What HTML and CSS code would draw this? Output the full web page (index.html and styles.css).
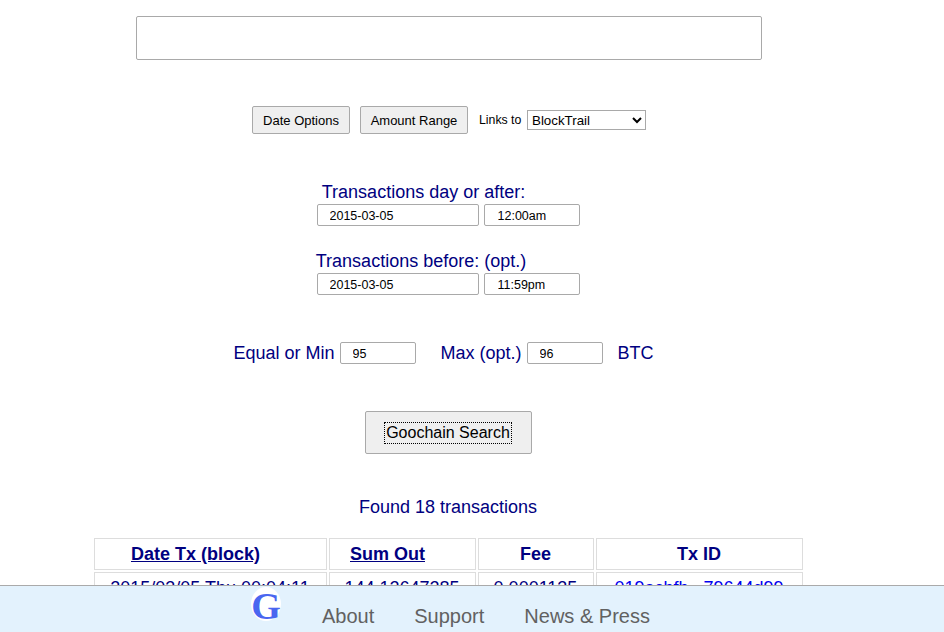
FILE: index.html
```html
<!DOCTYPE html>
<html lang="en">
<head>
<meta charset="utf-8">
<title>Goochain Search</title>
<link rel="stylesheet" href="styles.css">
</head>
<body>
<main class="page">
  <input class="query" type="text" aria-label="Search">
  <div class="options">
    <button class="btn btn-date" type="button">Date Options</button>
    <button class="btn btn-amount" type="button">Amount Range</button>
    <label class="links-label">Links to</label>
    <select class="links-select"><option>BlockTrail</option></select>
  </div>
  <section class="dates">
    <div class="date-group">
      <div class="date-label label-after">Transactions day or after:</div>
      <div class="date-fields">
        <input class="field field-date" type="text" value="2015-03-05">
        <input class="field field-time" type="text" value="12:00am">
      </div>
    </div>
    <div class="date-group">
      <div class="date-label label-before">Transactions before: (opt.)</div>
      <div class="date-fields">
        <input class="field field-date" type="text" value="2015-03-05">
        <input class="field field-time" type="text" value="11:59pm">
      </div>
    </div>
  </section>
  <div class="amounts">
    <span>Equal or Min</span>
    <input class="field field-amount" type="text" value="95">
    <span class="max-label">Max (opt.)</span>
    <input class="field field-amount" type="text" value="96">
    <span class="btc">BTC</span>
  </div>
  <div class="search-row"><button class="search-btn" type="button"><span class="focus-ring">Goochain Search</span></button></div>
  <p class="found">Found 18 transactions</p>
  <table class="results">
    <colgroup><col class="c1"><col class="c2"><col class="c3"><col class="c4"></colgroup>
    <thead>
      <tr><th class="sortable"><a href="#">Date Tx (block)</a></th><th class="sortable"><a href="#">Sum Out</a></th><th>Fee</th><th>Tx ID</th></tr>
    </thead>
    <tbody>
      <tr><td>2015/03/05 Thu 00:04:11</td><td>144.12647285</td><td>0.0001135</td><td><a class="tx" href="#">019acbfb...79644d99</a></td></tr>
    </tbody>
  </table>
</main>
<footer class="footer">
  <span class="logo">G</span>
  <a href="#">About</a>
  <a href="#">Support</a>
  <a href="#">News &amp; Press</a>
</footer>
</body>
</html>
```
FILE: styles.css
```css
* { box-sizing: border-box; }
html, body { height: 100%; }
body {
  margin: 0;
  overflow: hidden;
  background: #fff;
  color: #000080;
  font-family: "Liberation Sans", Arial, sans-serif;
}
.page {
  width: 896px;
  display: flex;
  flex-direction: column;
  align-items: center;
  padding-top: 16px;
}
input, select, button { font-family: "Liberation Sans", Arial, sans-serif; margin: 0; }
.query {
  width: 626px;
  height: 44px;
  margin-left: 2px;
  border: 1px solid #a9a9a9;
  border-radius: 2px;
  background: #fff;
}
.options {
  display: flex;
  align-items: center;
  margin-top: 46px;
  height: 28px;
  margin-left: 2px;
  color: #000;
}
.btn {
  height: 28px;
  padding: 0;
  font-size: 13px;
  color: #000;
  background: #efefef;
  border: 1px solid #a9a9a9;
  border-radius: 2px;
  margin-right: 10px;
  white-space: nowrap;
}
.btn-date { width: 98px; }
.btn-amount { width: 108px; }
.links-label { width: 43px; font-size: 12.3px; margin-left: 1px; margin-right: 5px; color: #000; white-space: nowrap; }
.links-select {
  width: 119px;
  height: 20px;
  font-size: 13.33px;
  border: 1px solid #a9a9a9;
  background: #fff;
  color: #000;
}
.dates { display: flex; flex-direction: column; gap: 24px; margin-top: 47px; }
.date-group { display: flex; flex-direction: column; align-items: center; }
.date-label { font-size: 18px; line-height: 23px; height: 23px; white-space: nowrap; }
.label-after { margin-right: 49px; }
.label-before { margin-right: 54px; }
.date-fields { display: flex; gap: 5px; }
.field {
  height: 22px;
  padding: 1px 0 0 12px;
  font-size: 12.5px;
  color: #000;
  background: #fff;
  border: 1px solid #a9a9a9;
  border-radius: 2px;
}
.field-date { width: 162px; }
.field-time { width: 96px; padding-left: 13px; }
.amounts {
  display: flex;
  align-items: center;
  height: 22px;
  margin-top: 47px;
  margin-right: 9px;
  font-size: 18px;
  white-space: nowrap;
}
.field-amount { width: 76px; margin-left: 5px; }
.max-label { margin-left: 25px; }
.btc { margin-left: 15px; }
.search-row { margin-top: 47px; }
.search-btn {
  width: 167px;
  height: 43px;
  font-size: 16px;
  color: #000;
  background: #efefef;
  border: 1px solid #a9a9a9;
  border-radius: 2px;
  padding: 0;
}
.focus-ring { display: inline-block; outline: 1px dotted #000; padding: 0 1px; line-height: 20px; }
.found { margin: 43px 0 0; font-size: 18px; line-height: 20px; height: 20px; }
.results {
  margin-top: 19px;
  border-collapse: separate;
  border-spacing: 2px;
  table-layout: fixed;
  width: 713px;
  font-size: 18px;
}
.c1 { width: 233px; }
.c2 { width: 147px; }
.c3 { width: 116px; }
.c4 { width: 207px; }
.results th, .results td {
  border: 1px solid #ddd;
  text-align: center;
  padding: 0;
  height: 32px;
  white-space: nowrap;
  overflow: hidden;
}
.results th.sortable { padding-right: 29px; }
.results th a { color: #000080; }
.tx { color: #0000ee; text-decoration: none; }
.footer {
  position: fixed;
  left: 0;
  right: 0;
  bottom: 0;
  height: 47px;
  display: flex;
  align-items: flex-start;
  padding-left: 251px;
  background: #e3f2fd;
  border-top: 1px solid #aaa;
  font-size: 20px;
}
.footer a { color: #616161; text-decoration: none; margin-top: 19px; line-height: 23px; margin-right: 40px; }
.logo {
  width: 30px;
  height: 34px;
  margin: 1px 41px 0 0;
  text-align: center;
  font-family: "Liberation Serif", serif;
  font-weight: bold;
  font-size: 38px;
  line-height: 38px;
  color: #4a66f0;
  background: #fff;
  border-radius: 50%;
}
```
